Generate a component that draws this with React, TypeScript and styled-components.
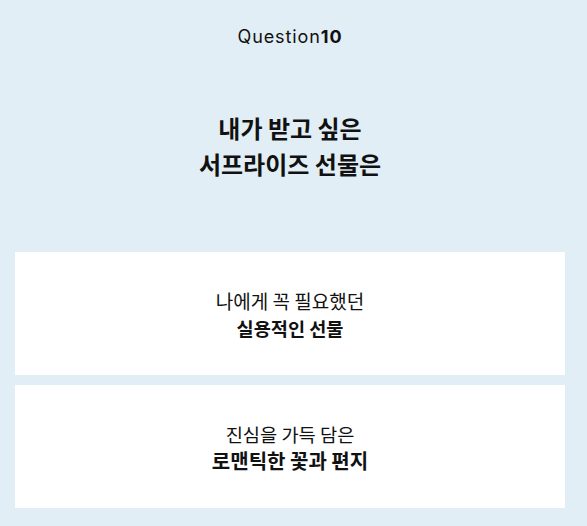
import React from "react";
import styled, { createGlobalStyle } from "styled-components";

const GlobalStyle = createGlobalStyle`
  html, body {
    margin: 0;
    padding: 0;
    background: #e1eef5;
  }
  body {
    font-family: "Noto Sans CJK KR", "Noto Sans", sans-serif;
    color: #111;
  }
`;

const Page = styled.main`
  width: 580px;
  box-sizing: border-box;
  padding: 25px 15px 18px;
  display: flex;
  flex-direction: column;
  align-items: stretch;
`;

const QuestionLabel = styled.div`
  height: 24px;
  line-height: 24px;
  text-align: center;
  font-family: "Inter", "Lato", sans-serif;
  font-size: 18px;
  font-weight: 400;
  color: #111;
  letter-spacing: 0.9px;
  b {
    font-weight: 700;
  }
`;

const Title = styled.h1`
  margin: 61px 0 0;
  text-align: center;
  font-family: "Noto Sans CJK KR", sans-serif;
  font-size: 24px;
  line-height: 36px;
  font-weight: 700;
  color: #111;
`;

const Options = styled.div`
  margin-top: 70px;
  display: flex;
  flex-direction: column;
  gap: 10px;
`;

const OptionCard = styled.button`
  height: 123px;
  border: none;
  background: #ffffff;
  display: flex;
  flex-direction: column;
  align-items: center;
  justify-content: center;
  padding: 0;
  cursor: pointer;
  font-family: "Noto Sans CJK KR", sans-serif;
  color: #111;
`;

const OptionSub = styled.span<{ $size: number }>`
  font-size: ${(p) => p.$size}px;
  font-weight: 400;
  line-height: 27px;
`;

const OptionMain = styled.span<{ $size: number }>`
  font-size: ${(p) => p.$size}px;
  font-weight: 700;
  line-height: 27px;
`;

const options = [
  { sub: "나에게 꼭 필요했던", main: "실용적인 선물", subSize: 19, mainSize: 18.6 },
  { sub: "진심을 가득 담은", main: "로맨틱한 꽃과 편지", subSize: 18.7, mainSize: 20 },
];

export default function App() {
  return (
    <>
      <GlobalStyle />
      <Page>
        <QuestionLabel>
          Question<b>10</b>
        </QuestionLabel>
        <Title>
          내가 받고 싶은
          <br />
          서프라이즈 선물은
        </Title>
        <Options>
          {options.map((o) => (
            <OptionCard key={o.main}>
              <OptionSub $size={o.subSize}>{o.sub}</OptionSub>
              <OptionMain $size={o.mainSize}>{o.main}</OptionMain>
            </OptionCard>
          ))}
        </Options>
      </Page>
    </>
  );
}
